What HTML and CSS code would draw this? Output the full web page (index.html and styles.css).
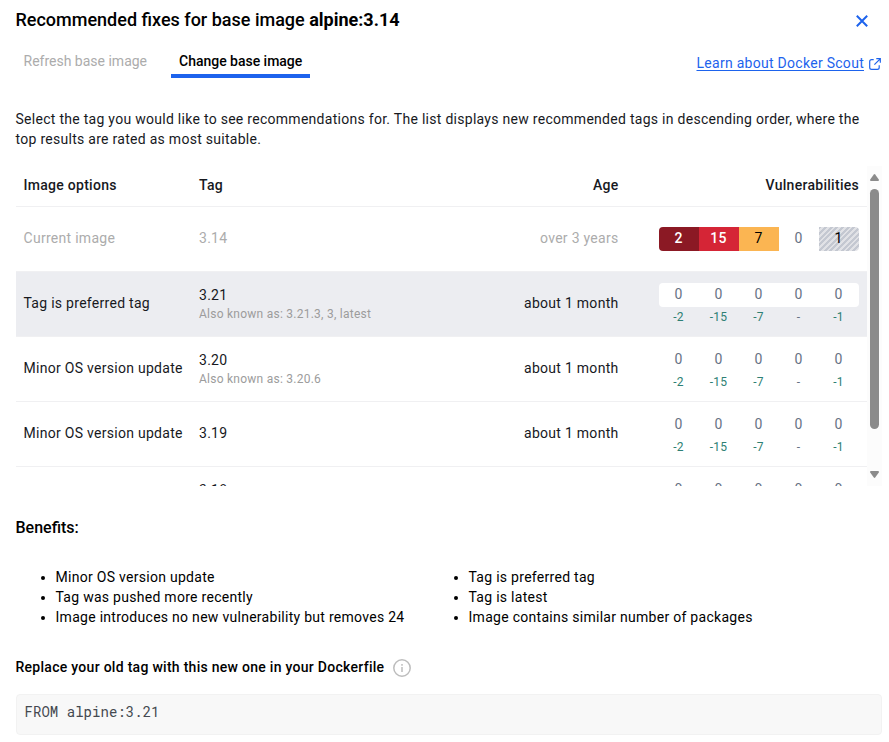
FILE: index.html
```html
<!DOCTYPE html>
<html lang="en">
<head>
<meta charset="utf-8">
<title>Recommended fixes</title>
<link rel="stylesheet" href="styles.css">
</head>
<body>
<main class="dialog">
  <header class="title-bar">
    <h1 class="title">Recommended fixes for base image <strong>alpine:3.14</strong></h1>
    <svg class="close" width="12" height="12" viewBox="0 0 12 12"><path d="M.8.8 11.2 11.2M11.2.8.8 11.2"/></svg>
  </header>
  <nav class="nav">
    <div class="tabs">
      <span class="tab">Refresh base image</span>
      <span class="tab tab-active">Change base image</span>
    </div>
    <a class="learn"><span class="learn-text">Learn about Docker Scout</span>
      <svg width="12" height="12" viewBox="0 0 12 12"><path d="M4.7 1.6H2.6Q.7 1.6.7 3.5v5.9q0 1.9 1.9 1.9h5.7q1.9 0 1.9-1.9V7.3M7.3.7h4v4M11.2.8 5.4 6.6"/></svg>
    </a>
  </nav>
  <p class="intro">Select the tag you would like to see recommendations for. The list displays new recommended tags in descending order, where the top results are rated as most suitable.</p>

  <section class="scroller">
    <div class="table">
      <div class="row head"><span>Image options</span><span>Tag</span><span class="age">Age</span><span class="age">Vulnerabilities</span></div>
      <div class="row current"><span>Current image</span><span>3.14</span><span class="age">over 3 years</span>
        <div class="counts"><b class="critical">2</b><b class="high">15</b><b class="medium">7</b><b>0</b><b class="unknown">1</b></div>
      </div>
      <div class="row selected"><span>Tag is preferred tag</span><div class="tag">3.21<small>Also known as: 3.21.3, 3, latest</small></div><span class="age">about 1 month</span>
        <div class="vulns"><div class="counts"><b>0</b><b>0</b><b>0</b><b>0</b><b>0</b></div><div class="deltas"><i>-2</i><i>-15</i><i>-7</i><i class="none">-</i><i>-1</i></div></div>
      </div>
      <div class="row"><span>Minor OS version update</span><div class="tag">3.20<small>Also known as: 3.20.6</small></div><span class="age">about 1 month</span>
        <div class="vulns"><div class="counts"><b>0</b><b>0</b><b>0</b><b>0</b><b>0</b></div><div class="deltas"><i>-2</i><i>-15</i><i>-7</i><i class="none">-</i><i>-1</i></div></div>
      </div>
      <div class="row"><span>Minor OS version update</span><span>3.19</span><span class="age">about 1 month</span>
        <div class="vulns"><div class="counts"><b>0</b><b>0</b><b>0</b><b>0</b><b>0</b></div><div class="deltas"><i>-2</i><i>-15</i><i>-7</i><i class="none">-</i><i>-1</i></div></div>
      </div>
      <div class="row last"><span></span><div class="tag">3.18</div><span></span>
        <div class="vulns"><div class="counts"><b>0</b><b>0</b><b>0</b><b>0</b><b>0</b></div></div>
      </div>
    </div>
    <div class="scrollbar">
      <svg width="9" height="7" viewBox="0 0 9 7"><path d="M3.8.5q.7-.9 1.4 0L8.8 5.6Q9.3 7 8 7H1Q-.3 7 .2 5.6Z"/></svg>
      <div class="track"><div class="thumb"></div></div>
      <svg width="9" height="7" viewBox="0 0 9 7"><path d="M3.8 6.5q.7.9 1.4 0L8.8 1.4Q9.3 0 8 0H1Q-.3 0 .2 1.4Z"/></svg>
    </div>
  </section>

  <h2 class="benefits-title">Benefits:</h2>
  <div class="benefits">
    <ul><li>Minor OS version update</li><li>Tag was pushed more recently</li><li>Image introduces no new vulnerability but removes 24</li></ul>
    <ul><li>Tag is preferred tag</li><li>Tag is latest</li><li>Image contains similar number of packages</li></ul>
  </div>
  <div class="replace"><span>Replace your old tag with this new one in your Dockerfile</span>
    <svg width="18" height="18" viewBox="0 0 18 18"><circle cx="9" cy="9" r="8.2"/><path d="M9 8v5M9 5v1.8"/></svg>
  </div>
  <pre class="code">FROM alpine:3.21</pre>
</main>
</body>
</html>
```
FILE: styles.css
```css
* { box-sizing: border-box; }
body {
  margin: 0;
  background: #fff;
  color: #000;
  font: 14px/20px Roboto, sans-serif;
  letter-spacing: 0.28px;
}
h1, h2, p, ul, pre { margin: 0; }
svg { display: block; flex: none; }
.dialog { height: 742px; padding: 8px 7px 0 15.5px; overflow: hidden; }
.title-bar { display: flex; justify-content: space-between; height: 38px; }
.title { font-size: 18px; line-height: 24px; font-weight: 500; letter-spacing: 0; }
.title strong { font-weight: 700; }
.close { margin: 7px 14px 0 0; fill: none; stroke: #1d63ed; stroke-width: 2; }

.nav { display: flex; justify-content: space-between; height: 63px; }
.tabs { display: flex; gap: 16px; height: 31.5px; }
.tab { padding: 5px 8px 0; color: #acacac; letter-spacing: 0; }
.tab-active { color: #000; font-weight: 500; border-bottom: 4px solid #1d63ed; letter-spacing: -0.02px; }
.learn { display: flex; gap: 5px; padding-top: 7px; color: #1d63ed; }
.learn-text { text-decoration: underline; text-underline-offset: 2px; }
.learn svg { margin: 5px 1px 0 0; fill: none; stroke: #1d63ed; stroke-width: 1.2; }
.intro { height: 57px; padding-right: 16px; color: #17191e; }

.scroller { display: flex; height: 320px; overflow: hidden; }
.table { flex: 1; }
.row {
  display: grid;
  grid-template-columns: 175.5px 1fr 150px 240.5px;
  align-items: center;
  height: 65px;
  padding: 0 8px 2px;
  border-bottom: 1px solid #f0f0f2;
  color: #17191e;
}
.head { height: 41px; font-weight: 500; }
.age { text-align: right; }
.current { padding-bottom: 1px; color: #acacac; }
.current span { padding-bottom: 1px; }
.selected { background: #ecedf1; }
.tag { line-height: 20px; }
.tag small { display: block; padding-top: 1px; margin-bottom: -1px; font-size: 12px; line-height: 16px; letter-spacing: 0.25px; color: #9c9c9c; }
.last { align-items: start; padding-top: 13px; border: 0; }
.vulns { align-self: start; padding-top: 11px; }
.last .vulns { padding-top: 0; margin-top: -2px; }
.counts, .deltas { display: grid; grid-template-columns: repeat(5, 40px); justify-content: end; text-align: center; }
.counts { width: 200px; margin-left: auto; border-radius: 4px; overflow: hidden; background: #fff; }
.counts b { height: 24px; padding-right: 1px; line-height: 23px; font-weight: 400; color: #677285; }
.counts .critical, .counts .high { color: #fff; font-weight: 500; }
.counts .critical { background: #8b1924; }
.counts .high { background: #d52536; }
.counts .medium { background: #fbb552; color: #000; }
.counts .unknown { color: #000; background: repeating-linear-gradient(135deg, #c4c8d1 0 2px, #e1e2e6 2px 4px); }
.deltas i { font-style: normal; font-size: 12px; line-height: 20px; color: #2e7f74; padding-right: 1px; }
.deltas .none { color: #677285; }
.scrollbar { display: flex; flex-direction: column; align-items: center; width: 15px; padding: 8px 0; background: #fcfcfc; fill: #8b8b8b; }
.track { flex: 1; padding-top: 8px; }
.thumb { width: 9px; height: 240px; border-radius: 4.5px; background: #8b8b8b; }

.benefits-title { margin-top: 30px; font-size: 16px; line-height: 24px; font-weight: 500; letter-spacing: 0; }
.benefits { display: grid; grid-template-columns: 413px 1fr; margin-top: 27px; }
.benefits ul { padding-left: 40px; }
.replace { display: flex; gap: 9px; margin-top: 30px; font-weight: 500; }
.replace svg { margin-top: 2px; fill: none; stroke: #bdbdbd; stroke-width: 1.5; }
.code { height: 41px; margin-top: 17px; padding: 7px 8px; border: 1px solid #f2f2f2; border-radius: 4px; background: #f8f8f8; color: #444950; font: 14px/20px "Roboto Mono", "Liberation Mono", monospace; letter-spacing: 0.04px; }
```
